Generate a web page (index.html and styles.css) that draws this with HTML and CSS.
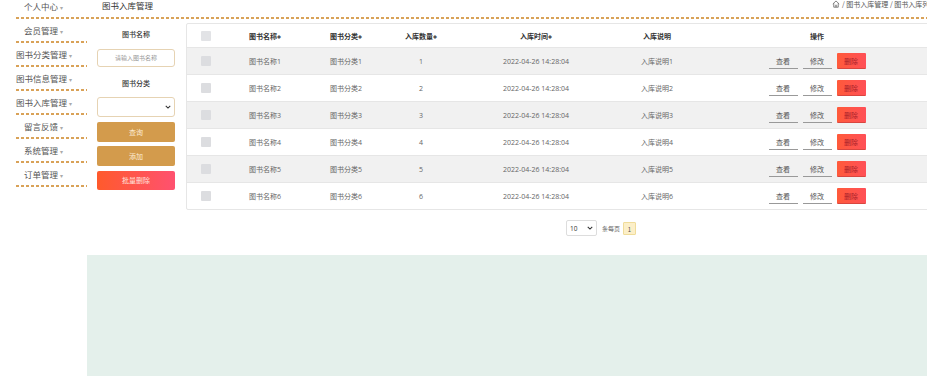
FILE: index.html
```html
<!DOCTYPE html>
<html lang="zh">
<head>
<meta charset="utf-8">
<title>图书入库管理</title>
<link rel="stylesheet" href="styles.css">
</head>
<body>
<div class="topbar">
  <div class="nav-first">个人中心 <span class="caret">▾</span></div>
  <div class="page-title">图书入库管理</div>
  <div class="crumb">
    <svg class="home" viewBox="0 0 10 10" width="8" height="8"><path d="M1 5 L5 1.2 L9 5 M2.2 4 V9 H7.8 V4" fill="none" stroke="#666" stroke-width="1"/><path d="M4.2 9 V6.5 H5.8 V9" fill="none" stroke="#666" stroke-width="0.8"/></svg>
    <span>/ 图书入库管理 / 图书入库列表</span>
  </div>
</div>
<div class="layout">
  <ul class="sidebar">
    <li>会员管理 <span class="caret">▾</span></li>
    <li>图书分类管理 <span class="caret">▾</span></li>
    <li>图书信息管理 <span class="caret">▾</span></li>
    <li>图书入库管理 <span class="caret">▾</span></li>
    <li>留言反馈 <span class="caret">▾</span></li>
    <li>系统管理 <span class="caret">▾</span></li>
    <li>订单管理 <span class="caret">▾</span></li>
  </ul>
  <div class="main">
    <div class="content">
      <div class="search">
        <div class="label">图书名称</div>
        <div class="input">请输入图书名称</div>
        <div class="label label2">图书分类</div>
        <div class="select"><svg viewBox="0 0 8 5" width="6" height="4"><path d="M1 1 L4 4 L7 1" fill="none" stroke="#333" stroke-width="1.4"/></svg></div>
        <div class="btn btn-query">查询</div>
        <div class="btn btn-add">添加</div>
        <div class="btn btn-batch">批量删除</div>
      </div>
      <div class="table-wrap">
        <table class="grid">
          <colgroup>
            <col class="c-check"><col class="c-name"><col class="c-cat"><col class="c-qty"><col class="c-time"><col class="c-desc"><col class="c-op">
          </colgroup>
          <thead>
            <tr>
              <th><span class="cb cb-head"></span></th>
              <th>图书名称<span class="sort">◆</span></th>
              <th>图书分类<span class="sort">◆</span></th>
              <th>入库数量<span class="sort">◆</span></th>
              <th>入库时间<span class="sort">◆</span></th>
              <th>入库说明</th>
              <th>操作</th>
            </tr>
          </thead>
          <tbody>
            <tr class="odd"><td><span class="cb"></span></td><td>图书名称1</td><td>图书分类1</td><td>1</td><td>2022-04-26 14:28:04</td><td>入库说明1</td><td class="ops"><span class="op">查看</span><span class="op">修改</span><span class="op del">删除</span></td></tr>
            <tr><td><span class="cb"></span></td><td>图书名称2</td><td>图书分类2</td><td>2</td><td>2022-04-26 14:28:04</td><td>入库说明2</td><td class="ops"><span class="op">查看</span><span class="op">修改</span><span class="op del">删除</span></td></tr>
            <tr class="odd"><td><span class="cb"></span></td><td>图书名称3</td><td>图书分类3</td><td>3</td><td>2022-04-26 14:28:04</td><td>入库说明3</td><td class="ops"><span class="op">查看</span><span class="op">修改</span><span class="op del">删除</span></td></tr>
            <tr><td><span class="cb"></span></td><td>图书名称4</td><td>图书分类4</td><td>4</td><td>2022-04-26 14:28:04</td><td>入库说明4</td><td class="ops"><span class="op">查看</span><span class="op">修改</span><span class="op del">删除</span></td></tr>
            <tr class="odd"><td><span class="cb"></span></td><td>图书名称5</td><td>图书分类5</td><td>5</td><td>2022-04-26 14:28:04</td><td>入库说明5</td><td class="ops"><span class="op">查看</span><span class="op">修改</span><span class="op del">删除</span></td></tr>
            <tr><td><span class="cb"></span></td><td>图书名称6</td><td>图书分类6</td><td>6</td><td>2022-04-26 14:28:04</td><td>入库说明6</td><td class="ops"><span class="op">查看</span><span class="op">修改</span><span class="op del">删除</span></td></tr>
          </tbody>
        </table>
        <div class="pager">
          <div class="size">10<svg viewBox="0 0 8 5" width="6" height="4"><path d="M1 1 L4 4 L7 1" fill="none" stroke="#333" stroke-width="1.4"/></svg></div>
          <span class="per">条每页</span>
          <span class="page">1</span>
        </div>
      </div>
    </div>
    <div class="footer-block"></div>
  </div>
</div>
</body>
</html>
```

FILE: styles.css
```css
html, body {
  margin: 0;
  padding: 0;
  background: #fff;
  overflow: hidden;
}
body {
  width: 927px;
  height: 376px;
  font-family: "Noto Sans CJK SC", "Open Sans", sans-serif;
  color: #555;
}

.topbar {
  display: flex;
  align-items: flex-start;
  margin-left: 16px;
  width: 940px;
  height: 19px;
  background-image: repeating-linear-gradient(to right, #d9a258 0 3px, transparent 3px 5px);
  background-size: 100% 2px;
  background-position: 0 17px;
  background-repeat: no-repeat;
}
.nav-first {
  width: 71px;
  box-sizing: border-box;
  padding-right: 16px;
  text-align: center;
  font-size: 8.5px;
  line-height: 12px;
  color: #555;
  white-space: nowrap;
}
.caret {
  font-size: 6px;
  color: #aaa;
}
.page-title {
  margin-left: 15px;
  font-size: 8.5px;
  line-height: 10px;
  color: #333;
}
.crumb {
  margin-left: auto;
  display: flex;
  align-items: center;
  gap: 2px;
  font-size: 7px;
  line-height: 8px;
  color: #555;
  width: 124px;
}
.home {
  display: block;
}

.layout {
  display: flex;
}
.sidebar {
  list-style: none;
  margin: 0 0 0 16px;
  padding: 0;
  width: 71px;
  flex: none;
}
.sidebar li {
  height: 24px;
  line-height: 22px;
  box-sizing: border-box;
  padding-right: 16px;
  text-align: center;
  font-size: 8.5px;
  color: #555;
  white-space: nowrap;
  background-image: repeating-linear-gradient(to right, #d9a258 0 3px, transparent 3px 5px);
  background-size: 100% 2px;
  background-position: 0 22px;
  background-repeat: no-repeat;
}

.main {
  flex: 1;
  min-width: 0;
}
.content {
  display: flex;
  padding: 4px 0 0 10px;
  gap: 11px;
}

.search {
  width: 78px;
  flex: none;
  display: flex;
  flex-direction: column;
}
.label {
  height: 22px;
  line-height: 22px;
  text-align: center;
  font-size: 7px;
  font-weight: 500;
  color: #333;
}
.input {
  margin-top: 4px;
  height: 18px;
  box-sizing: border-box;
  border: 1px solid #e6d3b3;
  border-radius: 3px;
  font-size: 6px;
  line-height: 16px;
  text-align: center;
  color: #999;
}
.label2 {
  margin-top: 5px;
}
.select {
  margin-top: 3px;
  height: 20px;
  box-sizing: border-box;
  border: 1px solid #e6d3b3;
  border-radius: 3px;
  display: flex;
  align-items: center;
  justify-content: flex-end;
  padding-right: 3px;
}
.btn {
  height: 20px;
  line-height: 20px;
  text-align: center;
  font-size: 7px;
  color: #fdebd3;
  border-radius: 2px;
}
.btn-query {
  margin-top: 5px;
  background: #d39b4c;
}
.btn-add {
  margin-top: 4px;
  background: #d39b4c;
}
.btn-batch {
  margin-top: 5px;
  height: 19px;
  line-height: 19px;
  background: linear-gradient(90deg, #ff5a2c, #ff5170);
  color: #ffe3dc;
}

.table-wrap {
  width: 830px;
  flex: none;
}
.grid {
  width: 750px;
  border-collapse: separate;
  border-spacing: 0;
  border: 1px solid #e6e6e6;
  border-radius: 2px;
  table-layout: fixed;
  font-size: 7px;
}
.c-check { width: 38px; }
.c-name { width: 80px; }
.c-cat { width: 82px; }
.c-qty { width: 68px; }
.c-time { width: 162px; }
.c-desc { width: 80px; }
.c-op { width: 240px; }

.grid th {
  height: 23px;
  padding: 0;
  font-weight: 700;
  color: #333;
  text-align: center;
  border-bottom: 1px solid #e6e6e6;
  white-space: nowrap;
}
.sort {
  font-size: 4px;
  vertical-align: middle;
  color: #555;
}
.grid td {
  height: 26px;
  padding: 0;
  text-align: center;
  color: #666;
  border-bottom: 1px solid #e6e6e6;
  white-space: nowrap;
  font-family: "Open Sans", "Noto Sans CJK SC", sans-serif;
}
.grid tbody tr:last-child td {
  border-bottom: none;
}
.grid tr.odd td {
  background: #f1f1f1;
}
.cb {
  display: inline-block;
  width: 10px;
  height: 10px;
  background: #dcdde0;
  border-radius: 1px;
  vertical-align: middle;
}
.cb-head {
  background: #e2e3e6;
}
.ops {
  font-size: 0;
}
.op {
  display: inline-block;
  width: 29px;
  height: 16px;
  line-height: 16px;
  box-sizing: border-box;
  margin: 0 2.5px;
  font-size: 7px;
  color: #555;
  border-bottom: 1px solid #999;
  vertical-align: middle;
  font-family: "Noto Sans CJK SC", sans-serif;
}
.op.del {
  background: linear-gradient(90deg, #ff5a3a, #ff5057);
  color: #a8202a;
  border-bottom: 1px solid #d9463f;
  border-radius: 1px;
}

.pager {
  display: flex;
  justify-content: center;
  align-items: center;
  margin-top: 10px;
  height: 16px;
  font-size: 6px;
  color: #666;
}
.size {
  width: 31px;
  height: 16px;
  box-sizing: border-box;
  border: 1px solid #ddd;
  border-radius: 2px;
  display: flex;
  align-items: center;
  justify-content: space-between;
  padding: 0 3px 0 3px;
  font-size: 6.5px;
  color: #333;
  font-family: "Open Sans", sans-serif;
}
.per {
  margin-left: 5px;
}
.page {
  margin-left: 3px;
  width: 13px;
  height: 13px;
  line-height: 13px;
  box-sizing: border-box;
  text-align: center;
  background: #fcefc8;
  border: 1px solid #f0dc9a;
  border-radius: 1px;
  color: #555;
}

.footer-block {
  margin-top: 19px;
  height: 140px;
  background: #e4f0eb;
}
```
